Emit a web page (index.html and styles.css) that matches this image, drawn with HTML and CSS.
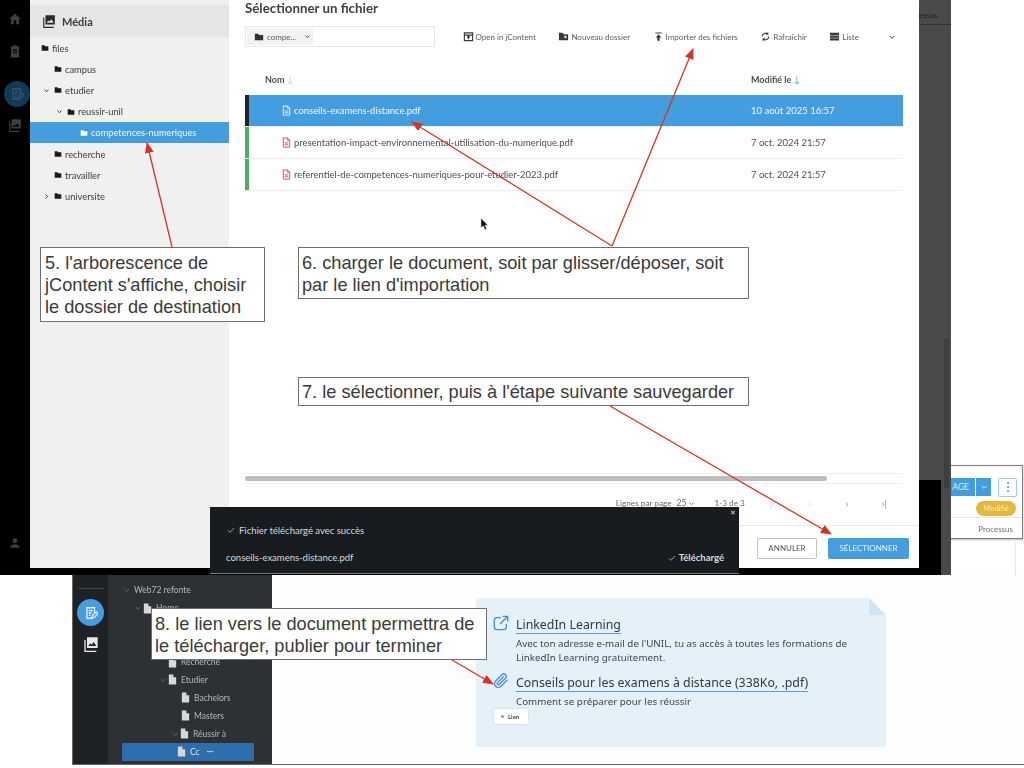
FILE: index.html
```html
<!DOCTYPE html>
<html lang="fr">
<head>
<meta charset="utf-8">
<title>Sélectionner un fichier</title>
<link rel="stylesheet" href="styles.css">
</head>
<body>
<svg class="defs" width="0" height="0" aria-hidden="true">
  <symbol id="folder" viewBox="0 0 24 24"><path fill="currentColor" d="M2 4h8l2.5 3H22v13H2z"/></symbol>
  <symbol id="chev" viewBox="0 0 24 24"><path fill="none" stroke="currentColor" stroke-width="3" d="M5 9l7 7 7-7"/></symbol>
  <symbol id="chevr" viewBox="0 0 24 24"><path fill="none" stroke="currentColor" stroke-width="3" d="M9 5l7 7-7 7"/></symbol>
  <symbol id="media" viewBox="0 0 24 24"><path fill="currentColor" d="M6 2h16v16H6zM8 15h12l-4-6-3 4-2-2zM2 6h2v16h16v2H2z"/></symbol>
  <symbol id="doc" viewBox="0 0 24 24"><path fill="none" stroke="currentColor" stroke-width="2" d="M5 2h9l5 5v15H5zM14 2v5h5M8 13h8M8 17h8"/></symbol>
  <symbol id="page" viewBox="0 0 24 24"><path fill="currentColor" d="M4 1h10l6 6v16H4zM14 1v6h6" /></symbol>
  <symbol id="check" viewBox="0 0 24 24"><path fill="none" stroke="currentColor" stroke-width="2" d="M3 13l6 6L21 6"/></symbol>
</svg>

<main class="canvas">

  <!-- bottom-right editor window, mostly covered -->
  <section class="win win-edit">
    <div class="edit-actions">
      <span class="btn-page">AGE</span>
      <span class="btn-drop"><svg class="i8"><use href="#chev"/></svg></span>
      <span class="btn-kebab"><i></i><i></i><i></i></span>
    </div>
    <div class="edit-status"><span class="pill">Modifié</span></div>
    <div class="edit-tabs">Processus</div>
  </section>
  <div class="page-line line-a"></div>
  <div class="page-line line-b"></div>

  <!-- bottom window: editor with the link card -->
  <section class="win win-page">
    <nav class="page-nav">
      <span class="page-nav-rule"></span>
      <span class="page-nav-active">
        <svg class="i14" viewBox="0 0 24 24"><path fill="none" stroke="currentColor" stroke-width="2.2" d="M18 11V3H5v18h7M8 8h7M8 12h5M8 16h3M13 21l1-4 7-7 3 3-7 7z"/></svg>
      </span>
      <svg class="i16 media-light"><use href="#media"/></svg>
    </nav>
    <aside class="page-tree">
      <div class="pt-row d0"><svg class="i8 dim"><use href="#chev"/></svg>Web72 refonte</div>
      <div class="pt-row d1"><svg class="i8 dim"><use href="#chev"/></svg><svg class="i10"><use href="#page"/></svg>Home</div>
      <div class="pt-row d2"></div>
      <div class="pt-row d3"></div>
      <div class="pt-row d3"><svg class="i10"><use href="#page"/></svg>Recherche</div>
      <div class="pt-row d4"><svg class="i8 dim"><use href="#chev"/></svg><svg class="i10"><use href="#page"/></svg>Etudier</div>
      <div class="pt-row d5"><svg class="i10"><use href="#page"/></svg>Bachelors</div>
      <div class="pt-row d5"><svg class="i10"><use href="#page"/></svg>Masters</div>
      <div class="pt-row d6"><svg class="i8 dim"><use href="#chev"/></svg><svg class="i10"><use href="#page"/></svg>Réussir à</div>
      <div class="pt-row pt-sel"><svg class="i8 dim"><use href="#chev"/></svg><svg class="i10"><use href="#page"/></svg>Cc<span class="dots">•••</span></div>
    </aside>
    <div class="page-body">
      <article class="card">
        <div class="link-row">
          <svg class="link-icon" viewBox="0 0 24 24"><path fill="none" stroke="currentColor" stroke-width="2" stroke-linecap="round" d="M11 4H6a4 4 0 0 0-4 4v10a4 4 0 0 0 4 4h10a4 4 0 0 0 4-4v-4M15 2h7v7M22 2L11 13"/></svg>
          <div>
            <a class="link-title">LinkedIn Learning</a>
            <p class="link-desc">Avec ton adresse e-mail de l'UNIL, tu as accès à toutes les formations de<br>LinkedIn Learning gratuitement.</p>
          </div>
        </div>
        <div class="link-row">
          <svg class="link-icon" viewBox="0 0 24 24"><path fill="none" stroke="currentColor" stroke-width="2" stroke-linecap="round" d="M21 11l-9 9a5.5 5.5 0 0 1-8-8l9.500-9.500a3.700 3.700 0 0 1 5.300 5.300L9.500 17a1.800 1.800 0 0 1-2.600-2.600L15.500 6"/></svg>
          <div>
            <a class="link-title">Conseils pour les examens à distance (338Ko, .pdf)</a>
            <p class="link-desc">Comment se préparer pour les réussir</p>
          </div>
        </div>
        <span class="chip"><i></i>Lien</span>
      </article>
    </div>
  </section>

  <!-- top window: file picker -->
  <section class="win win-picker">
    <nav class="nav">
      <svg class="i14 home" viewBox="0 0 24 24"><path fill="currentColor" d="M10 21v-7h4v7h5v-9h3L12 3 2 12h3v9z"/></svg>
      <svg class="i14 clip" viewBox="0 0 24 24"><path fill="currentColor" d="M9 2h6v2h4v19H5V4h4zM8 10v2h8v-2zM8 14v2h8v-2z"/></svg>
      <span class="nav-active"><svg class="i14" viewBox="0 0 24 24"><path fill="none" stroke="currentColor" stroke-width="2.200" d="M18 11V3H5v18h7M8 8h7M8 12h5M8 16h3M13 21l1-4 7-7 3 3-7 7z"/></svg></span>
      <svg class="i14 nav-media"><use href="#media"/></svg>
      <svg class="i14 nav-user" viewBox="0 0 24 24"><path fill="currentColor" d="M12 4a4 4 0 1 1 0 8 4 4 0 0 1 0-8zM4 20c0-4 4-6 8-6s8 2 8 6z"/></svg>
    </nav>

    <div class="dialog">
      <aside class="side">
        <h2 class="side-head"><svg class="i14 side-icon"><use href="#media"/></svg>Média</h2>
        <ul class="tree">
          <li class="t0"><svg class="i8f"><use href="#folder"/></svg>files</li>
          <li class="t1"><svg class="i8f"><use href="#folder"/></svg>campus</li>
          <li class="t1 has"><svg class="i7"><use href="#chev"/></svg><svg class="i8f"><use href="#folder"/></svg>etudier</li>
          <li class="t2 has"><svg class="i7"><use href="#chev"/></svg><svg class="i8f"><use href="#folder"/></svg>reussir-unil</li>
          <li class="t3 sel"><svg class="i8f"><use href="#folder"/></svg>competences-numeriques</li>
          <li class="t1"><svg class="i8f"><use href="#folder"/></svg>recherche</li>
          <li class="t1"><svg class="i8f"><use href="#folder"/></svg>travailler</li>
          <li class="t1 has"><svg class="i7"><use href="#chevr"/></svg><svg class="i8f"><use href="#folder"/></svg>universite</li>
        </ul>
      </aside>

      <div class="pane">
        <h1 class="title">Sélectionner un fichier</h1>
        <div class="toolbar">
          <div class="crumb"><span class="crumb-chip"><svg class="i9"><use href="#folder"/></svg>compe...<svg class="i7 crumb-chev"><use href="#chev"/></svg></span></div>
          <span class="tool"><svg class="i10" viewBox="0 0 24 24"><path fill="none" stroke="currentColor" stroke-width="2.500" d="M3 4h18v17H3zM3 9h18M12 18v-6M9 14l3-3 3 3"/></svg>Open in jContent</span>
          <span class="tool"><svg class="i10" viewBox="0 0 24 24"><path fill="currentColor" d="M2 4h8l2.500 3H22v13H2zM15 10v2h-2v2h2v2h2v-2h2v-2h-2v-2z" fill-rule="evenodd"/></svg>Nouveau dossier</span>
          <span class="tool"><svg class="i10" viewBox="0 0 24 24"><path fill="currentColor" d="M5 3h14v2.500H5zM12 7l6 7h-3.500v7h-5v-7H6z"/></svg>Importer des fichiers</span>
          <span class="tool"><svg class="i10" viewBox="0 0 24 24"><path fill="none" stroke="currentColor" stroke-width="2.500" d="M19 12a7 7 0 0 1-12 5M5 12a7 7 0 0 1 12-5M17 3v4h-4M7 21v-4h4"/></svg>Rafraîchir</span>
          <span class="tool"><svg class="i10" viewBox="0 0 24 24"><path fill="currentColor" d="M2 4h20v4.500H2zM2 10h20v4.500H2zM2 16h20v4.500H2z"/></svg>Liste</span>
          <svg class="i8 tool-more"><use href="#chev"/></svg>
        </div>

        <div class="thead">
          <span class="col-name">Nom <b class="sort-off">↓</b></span>
          <span class="col-date">Modifié le <b class="sort-on">↓</b></span>
        </div>
        <div class="row row-sel">
          <span class="col-name"><svg class="i10"><use href="#doc"/></svg>conseils-examens-distance.pdf</span>
          <span class="col-date">10 août 2025 16:57</span>
        </div>
        <div class="row">
          <span class="col-name"><svg class="i10 pdf"><use href="#doc"/></svg>presentation-impact-environnemental-utilisation-du-numerique.pdf</span>
          <span class="col-date">7 oct. 2024 21:57</span>
        </div>
        <div class="row">
          <span class="col-name"><svg class="i10 pdf"><use href="#doc"/></svg>referentiel-de-competences-numeriques-pour-etudier-2023.pdf</span>
          <span class="col-date">7 oct. 2024 21:57</span>
        </div>

        <div class="hscroll"><div class="hthumb"></div></div>

        <div class="pager">
          <span>Lignes par page</span>
          <span class="pp">25<svg class="i7"><use href="#chev"/></svg></span>
          <span class="range">1-3 de 3</span>
          <span class="pg off">|‹</span><span class="pg off">‹</span><span class="pg">›</span><span class="pg">›|</span>
        </div>
      </div>

      <footer class="foot">
        <span class="btn-ghost">ANNULER</span>
        <span class="btn-main">SÉLECTIONNER</span>
      </footer>
    </div>

    <div class="backdrop">
      <div class="backdrop-tab">Processus</div>
      <div class="backdrop-low"></div>
      <span class="bar"></span>
    </div>
  </section>

  <!-- upload toast -->
  <aside class="toast">
    <span class="toast-x">✕</span>
    <div class="toast-head"><svg class="i8"><use href="#check"/></svg>Fichier téléchargé avec succès</div>
    <div class="toast-row">
      <span>conseils-examens-distance.pdf</span>
      <span class="toast-ok"><svg class="i8"><use href="#check"/></svg>Téléchargé</span>
    </div>
  </aside>

  <!-- callouts -->
  <div class="note n5">5. l'arborescence de<br>jContent s'affiche, choisir<br>le dossier de destination</div>
  <div class="note n6">6. charger le document, soit par glisser/déposer, soit<br>par le lien d'importation</div>
  <div class="note n7">7. le sélectionner, puis à l'étape suivante sauvegarder</div>
  <div class="note n8">8. le lien vers le document permettra de<br>le télécharger, publier pour terminer</div>

  <svg class="cursor" viewBox="0 0 10 14" aria-hidden="true"><path d="M1 0v11l2.600-2.400L5.500 13l2-.9-1.900-4.300H9z" fill="#111" stroke="#fff" stroke-width=".6"/></svg>

  <svg class="arrows" viewBox="0 0 1024 768" aria-hidden="true">
    <defs>
      <marker id="head" markerWidth="11" markerHeight="9" refX="10" refY="4.500" orient="auto" markerUnits="userSpaceOnUse"><path d="M0 0L11 4.500L0 9z" fill="#d5351f"/></marker>
    </defs>
    <g stroke="#d5351f" stroke-width="1.300" fill="none" marker-end="url(#head)">
      <path d="M172 247L147 143"/>
      <path d="M612 246L412 122"/>
      <path d="M612 246L693 49"/>
      <path d="M610 406L831 534"/>
      <path d="M452 660L493 684"/>
    </g>
  </svg>
</main>
</body>
</html>
```

FILE: styles.css
```css
* { box-sizing: border-box; }
html, body { margin: 0; padding: 0; background: #fff; }
body { width: 1024px; height: 768px; overflow: hidden; font-family: Lato, "Open Sans", sans-serif; color: #3f4347; }
.defs { position: absolute; }
.canvas { position: relative; width: 1024px; height: 768px; overflow: hidden; }
.win { position: absolute; filter: blur(0.3px); }
svg { flex: none; display: block; }
.i7 { width: 7px; height: 7px; }
.i8 { width: 8px; height: 8px; }
.i8f { width: 8px; height: 8px; }
.i9 { width: 10px; height: 10px; }
.i10 { width: 11px; height: 11px; }
.i14 { width: 14px; height: 14px; }
.i16 { width: 16px; height: 16px; }

/* picker window */
.win-picker { left: 0; top: 0; width: 951px; height: 575px; background: #000; display: flex; }
.nav { width: 30px; flex: none; background: #000; color: #3e3e3e; display: flex; flex-direction: column; align-items: center; position: relative; }
.home { margin-top: 12px; }
.clip { margin-top: 18px; }
.nav-active { margin-top: 23px; width: 26px; height: 26px; margin-left: 4px; border-radius: 50%; background: #123a57; color: #33546b; display: flex; align-items: center; justify-content: center; }
.nav-media { margin-top: 11px; }
.nav-user { margin-top: auto; margin-bottom: 25px; }

.dialog { width: 889px; height: 568px; flex: none; background: #fff; display: grid; grid-template-columns: 199px 1fr; grid-template-rows: 525px 43px; }
.side { grid-row: 1 / 3; background: #f0f0f0; padding-top: 5px; }
.side-head { margin: 0; height: 32px; background: #e5e5e5; display: flex; align-items: center; gap: 6px; padding-left: 12px; font-size: 11px; font-weight: 700; color: #3c3c3c; }
.side-icon { color: #2a2a2a; }
.tree { list-style: none; margin: 0; padding: 0; font-size: 9.300px; color: #3b3b3b; }
.tree li { height: 21.200px; padding-top: 1px; display: flex; align-items: center; gap: 3px; position: relative; }
.tree svg { color: #1b1b1b; }
.tree .t0 { padding-left: 11px; }
.tree .t1 { padding-left: 24px; }
.tree .t2 { padding-left: 37px; }
.tree .t3 { padding-left: 50px; }
.tree .has { gap: 3px; }
.tree .t1.has { padding-left: 13px; }
.tree .t1.has .i7 { margin-right: 1px; }
.tree .t2.has { padding-left: 26px; }
.tree .t2.has .i7 { margin-right: 1px; }
.tree .sel { background: #449ddf; color: #eef7fd; }
.tree .sel svg { color: #fff; }

.pane { padding: 0 16px; display: flex; flex-direction: column; min-width: 0; }
.title { margin: 0; font-size: 13.300px; font-weight: 700; line-height: 16px; color: #3c3f42; }
.toolbar { margin-top: 10px; height: 21px; display: flex; align-items: center; gap: 22.500px; font-size: 8px; color: #5a5e62; }
.crumb { width: 190px; height: 21px; border: 1px solid #e6e6e6; padding: 1px; margin-right: 5px; }
.crumb-chip { width: 66px; height: 17px; background: #f1f1f1; display: flex; align-items: center; padding-left: 7px; gap: 3px; color: #5a5e62; }
.crumb-chip svg { color: #333; }
.crumb-chev { margin-left: 5px; }
.tool { display: flex; align-items: center; gap: 2px; white-space: nowrap; }
.tool svg { color: #3a3a3a; }
.tool-more { margin-left: 7px; color: #333; }
.thead { margin-top: 21px; height: 27px; padding-bottom: 5px; display: flex; align-items: center; font-size: 9px; font-weight: 700; color: #4a4e52; padding-left: 20px; }
.thead b { font-weight: 400; }
.sort-off { color: #ccc; }
.sort-on { color: #4aa3e6; }
.thead .col-name, .row .col-name { flex: 1; display: flex; align-items: center; gap: 2px; white-space: pre; }
.thead .col-name { white-space: pre-wrap; display: block; }
.col-date { width: 152px; flex: none; }
.row { margin-top: 1px; height: 31px; display: flex; align-items: center; font-size: 9.450px; color: #4a4e52; border-left: 4px solid #4fae62; padding-left: 32px; box-shadow: 0 1px 0 #eee; }
.row .col-date { font-size: 9.500px; }
.row-sel { margin-top: 0; background: #449ddf; color: #eef7fd; border-left-color: #222; }
.pdf { color: #d9453f; }
.hscroll { margin-top: auto; height: 11px; border-top: 1px solid #eee; border-bottom: 1px solid #eee; padding-top: 2px; }
.hthumb { width: 582px; height: 5px; background: #bdbdbd; border-radius: 3px; }
.pager { height: 41px; padding-bottom: 3px; display: flex; align-items: center; justify-content: flex-end; font-size: 8.200px; color: #666; }
.pp { display: flex; align-items: center; gap: 2px; margin-left: 5px; font-size: 8.500px; }
.range { margin-left: 19px; margin-right: 9px; }
.pg { width: 37.300px; text-align: center; font-size: 10px; color: #888; }
.pg.off { color: #d0d0d0; }
.foot { grid-column: 2; border-top: 1px solid #e8e8e8; display: flex; align-items: center; justify-content: flex-end; gap: 11px; padding: 2px 10px 0 0; font-size: 8px; }
.btn-ghost { width: 60px; height: 21px; border: 1px solid #bfc3c7; border-radius: 2px; display: flex; align-items: center; justify-content: center; color: #555; }
.btn-main { width: 81px; height: 21px; border-radius: 2px; background: #449ddf; color: #e8f4fc; display: flex; align-items: center; justify-content: center; }

.backdrop { width: 32px; height: 100%; background: #4a4a4a; display: flex; flex-direction: column; position: relative; }
.backdrop-tab { height: 25px; padding-top: 11px; overflow: hidden; font-size: 8px; line-height: 8px; color: #1e1e1e; text-indent: -16px; white-space: nowrap; border-bottom: 1px solid #333; }
.backdrop-low { margin-top: 455px; flex: 1; width: 22px; background: #000; }
.bar { position: absolute; left: 25px; top: 338px; height: 151px; width: 5px; border-radius: 3px; background: #3e3e3e; }

/* editor window behind */
.win-edit { left: 900px; top: 465px; width: 123px; height: 74px; background: #fff; border: 1px solid #7a7a7a; box-shadow: 0 1px 2px #bbb; }
.edit-actions { position: absolute; left: 50px; top: 11px; width: 66px; height: 20px; display: flex; align-items: center; }
.btn-page { width: 24px; height: 18px; background: #449ddf; color: #d5ebfa; font-size: 8.500px; display: flex; align-items: center; justify-content: flex-end; padding-right: 6px; }
.btn-drop { margin-left: 1px; width: 15px; height: 18px; background: #449ddf; color: #e8f4fc; display: flex; align-items: center; justify-content: center; }
.btn-kebab { margin-left: 7px; width: 19px; height: 19px; border: 1px solid #9ccdf0; border-radius: 2px; display: flex; flex-direction: column; align-items: center; justify-content: center; gap: 2px; }
.btn-kebab i { width: 2px; height: 2px; border-radius: 50%; background: #449ddf; }
.edit-status { position: absolute; right: 6px; top: 35px; }
.pill { display: block; width: 40px; height: 15px; border-radius: 8px; background: #e3b83f; color: #fbeec7; font-size: 7.500px; line-height: 15px; text-align: center; }
.edit-tabs { position: absolute; left: 0; right: 0; top: 51px; height: 21px; border-top: 1px solid #e5e5e5; padding: 6px 9px 0 0; text-align: right; font-size: 8px; color: #707070; }
.page-line { position: absolute; top: 539px; width: 1px; height: 40px; background: #e8e8e8; }
.line-a { left: 885px; }
.line-b { left: 1015px; }

/* page window */
.win-page { left: 72px; top: 575px; width: 952px; height: 190px; display: flex; background: #fff; border-bottom: 1px solid #666; }
.page-nav { width: 36px; flex: none; background: #1e2225; border-left: 1px solid #666; display: flex; flex-direction: column; align-items: center; }
.page-nav-rule { margin-top: 13px; width: 26px; height: 1px; background: #3c4043; }
.page-nav-active { margin-top: 10px; width: 27px; height: 27px; border-radius: 50%; background: #449ddf; color: #e9f5fd; display: flex; align-items: center; justify-content: center; }
.media-light { margin-top: 10px; color: #e8e8e8; }
.page-tree { width: 164px; flex: none; background: #2e3134; color: #b5b8ba; font-size: 8.500px; padding-top: 6.500px; }
.pt-row { height: 17.900px; display: flex; align-items: center; gap: 3px; white-space: nowrap; }
.pt-row .i10 { color: #d8d8d8; }
.dim { color: #666a6d; margin-right: -3px; }
.d0 { padding-left: 15px; }
.d0 .dim { margin-right: 0; }
.d1 { padding-left: 26px; }
.d2 { padding-left: 38px; }
.d3 { padding-left: 59px; }
.d4 { padding-left: 51px; }
.d5 { padding-left: 72px; }
.d6 { padding-left: 63px; }
.pt-sel { margin: 0 18px 0 14px; height: 18px; padding-left: 46px; background: #2f6eac; color: #d8e6f2; }
.dots { margin-left: 4px; font-size: 4px; }
.page-body { flex: 1; background: #fdfdfd; padding: 23px 0 0 204px; position: relative; }
.card { width: 410px; height: 149px; background: #e5f1f9; border-radius: 3px; padding: 15px 14px 0 17px; position: relative; clip-path: polygon(0 0, 393px 0, 410px 17px, 410px 100%, 0 100%); }
.card::after { content: ""; position: absolute; right: 0; top: 0; width: 17px; height: 17px; background: #cfe5f4; clip-path: polygon(0 0, 100% 100%, 0 100%); }
.link-row { display: flex; gap: 7px; margin-bottom: 5px; }
.link-icon { width: 16px; height: 16px; color: #4a90c9; margin-top: 2px; }
.link-title { display: inline-block; font-family: "Noto Sans", sans-serif; font-size: 12.350px; line-height: 14px; color: #32383e; border-bottom: 1.500px solid #5f9bd0; padding-bottom: 1px; }
.link-desc { margin: 3px 0 0; font-family: "Noto Sans", sans-serif; font-size: 9.800px; line-height: 14.300px; color: #3f454b; }
.chip { position: absolute; left: 18px; top: 111px; width: 34px; height: 15px; background: #fff; border-radius: 2px; box-shadow: 0 0 2px #c8c8c8; display: flex; align-items: center; gap: 4px; padding-left: 7px; font-size: 6px; font-weight: 700; color: #444; }
.chip i { width: 3px; height: 3px; border-radius: 50%; background: #6cc04a; }

/* toast */
.toast { position: absolute; left: 210px; top: 507px; width: 529px; height: 67px; background: #181c20; color: #d7d9db; font-size: 9.500px; padding: 17px 15px 0 16px; border-bottom: 1px solid #777; }
.toast-x { position: absolute; right: 3px; top: 1px; font-size: 7px; color: #ddd; }
.toast-head { display: flex; align-items: center; gap: 4px; padding-left: 1px; height: 12px; }
.toast-row { display: flex; justify-content: space-between; margin-top: 16px; }
.toast-ok { display: flex; align-items: center; gap: 3px; font-weight: 700; }

/* callouts */
.note { position: absolute; background: #fff; border: 1px solid #6e6e6e; font-family: "Liberation Sans", sans-serif; font-size: 18.200px; line-height: 22px; color: #3a3a3a; padding: 4px 3px; white-space: nowrap; }
.n5 { left: 40px; top: 247px; width: 225px; height: 75px; padding-left: 4px; }
.n6 { left: 298px; top: 247px; width: 451px; height: 52px; }
.n7 { left: 298px; top: 377px; width: 451px; height: 29px; padding-top: 3px; }
.n8 { left: 151px; top: 608px; width: 336px; height: 52px; }
.cursor { position: absolute; left: 480px; top: 218px; width: 9px; height: 13px; }
.arrows { position: absolute; left: 0; top: 0; width: 1024px; height: 768px; }
```
